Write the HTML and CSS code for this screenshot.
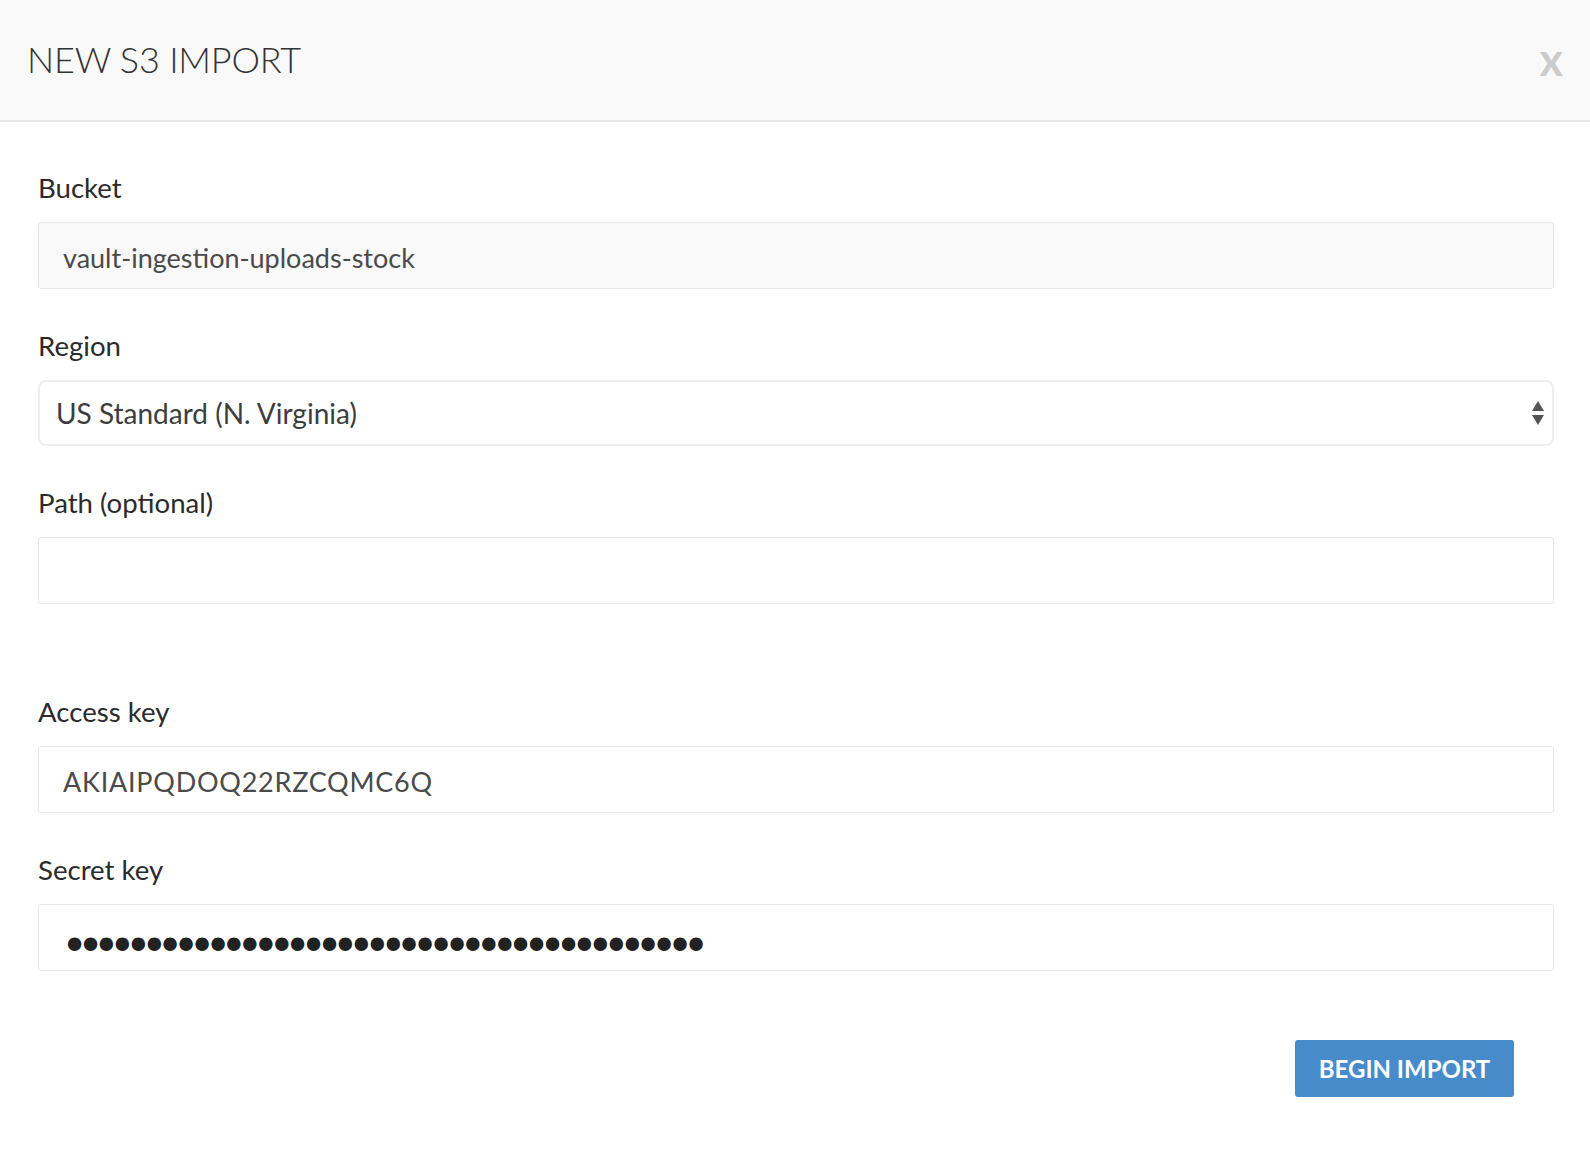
FILE: index.html
```html
<!DOCTYPE html>
<html lang="en">
<head>
  <meta charset="UTF-8" />
  <meta name="viewport" content="width=device-width, initial-scale=1" />
  <title>New S3 Import</title>
  <link rel="stylesheet" href="styles.css">
</head>
<body>
  <div class="modal">
    <div class="modal-header">
      <h2>NEW S3 IMPORT</h2>
      <span class="close">x</span>
    </div>
    <form class="modal-body" id="importForm">
      <div class="field">
        <label for="bucket">Bucket</label>
        <input type="text" id="bucket" class="readonly" value="vault-ingestion-uploads-stock" readonly />
      </div>

      <div class="field">
        <label for="region">Region</label>
        <div class="select-wrap">
          <select id="region">
            <option>US Standard (N. Virginia)</option>
            <option>US West (Oregon)</option>
            <option>EU (Ireland)</option>
          </select>
          <svg class="select-arrows" width="14" height="26" viewBox="0 0 14 26">
            <path d="M7 0 L13 10 L1 10 Z" fill="#555" />
            <path d="M1 14 L13 14 L7 24 Z" fill="#555" />
          </svg>
        </div>
      </div>

      <div class="field">
        <label for="path">Path (optional)</label>
        <input type="text" id="path" />
      </div>

      <div class="spacer"></div>

      <div class="field">
        <label for="access">Access key</label>
        <input type="text" id="access" class="key" value="AKIAIPQDOQ22RZCQMC6Q" />
      </div>

      <div class="field">
        <label for="secret">Secret key</label>
        <input type="password" id="secret" value="wJalrXUtnFEMIK7MDENGbPxRfiCYEXAMPLEKEYab" />
      </div>

      <div class="actions">
        <button type="submit">BEGIN IMPORT</button>
      </div>
    </form>
  </div>
</body>
</html>
```

FILE: styles.css
```css
* {
  margin: 0;
  padding: 0;
  box-sizing: border-box;
}
body {
  font-family: Lato, 'Open Sans', sans-serif;
  background: #fff;
  color: #333;
}
.modal-header {
  height: 122px;
  background: #f9f9f9;
  border-bottom: 2px solid #e6e6e6;
  display: flex;
  align-items: center;
  justify-content: space-between;
  padding: 0 27px 0 27px;
}
.modal-header h2 {
  font-size: 36px;
  font-weight: 300;
  color: #333;
  letter-spacing: -0.2px;
  margin-top: -2px;
}
.close {
  font-size: 45px;
  font-weight: 700;
  color: #ccc;
  margin-top: -2px;
  cursor: pointer;
}
.modal-body {
  padding: 47px 36px 60px 38px;
}
.field {
  margin-bottom: 38px;
}
label {
  display: block;
  font-size: 27.6px;
  line-height: 38px;
  color: #2b2b2b;
  margin-bottom: 15px;
}
input {
  width: 100%;
  height: 67px;
  padding: 4px 24px 0;
  border: 1px solid #e8e8e8;
  border-radius: 3px;
  background: #fff;
  font-family: Lato, 'Open Sans', sans-serif;
  font-size: 27px;
  font-weight: 400;
  color: #4a4a4a;
  outline: none;
}
input.readonly {
  background: #f9f9f9;
}
input.key {
  letter-spacing: 0.75px;
}
input[type="password"] {
  padding: 16px 24px 0 22px;
  color: #222;
  font-family: 'DejaVu Sans', sans-serif;
  font-size: 46px;
  letter-spacing: -11.2px;
}
.select-wrap {
  position: relative;
}
select {
  width: 100%;
  height: 66px;
  padding: 0 16px;
  border: 2px solid #eee;
  border-radius: 8px;
  background: #fff;
  font-family: Lato, 'Open Sans', sans-serif;
  font-size: 28px;
  color: #3d3d3d;
  appearance: none;
  -webkit-appearance: none;
  outline: none;
}
.select-arrows {
  position: absolute;
  right: 9px;
  top: 21px;
  pointer-events: none;
}
.spacer {
  height: 51px;
}
.actions {
  display: flex;
  justify-content: flex-end;
  padding-right: 40px;
  margin-top: 69px;
}
button {
  width: 219px;
  height: 57px;
  background: #478bca;
  border: none;
  border-radius: 3px;
  color: #fff;
  font-family: Lato, 'Open Sans', sans-serif;
  font-size: 24px;
  font-weight: 700;
  cursor: pointer;
}
button:hover {
  background: #3b7dbb;
}
```
